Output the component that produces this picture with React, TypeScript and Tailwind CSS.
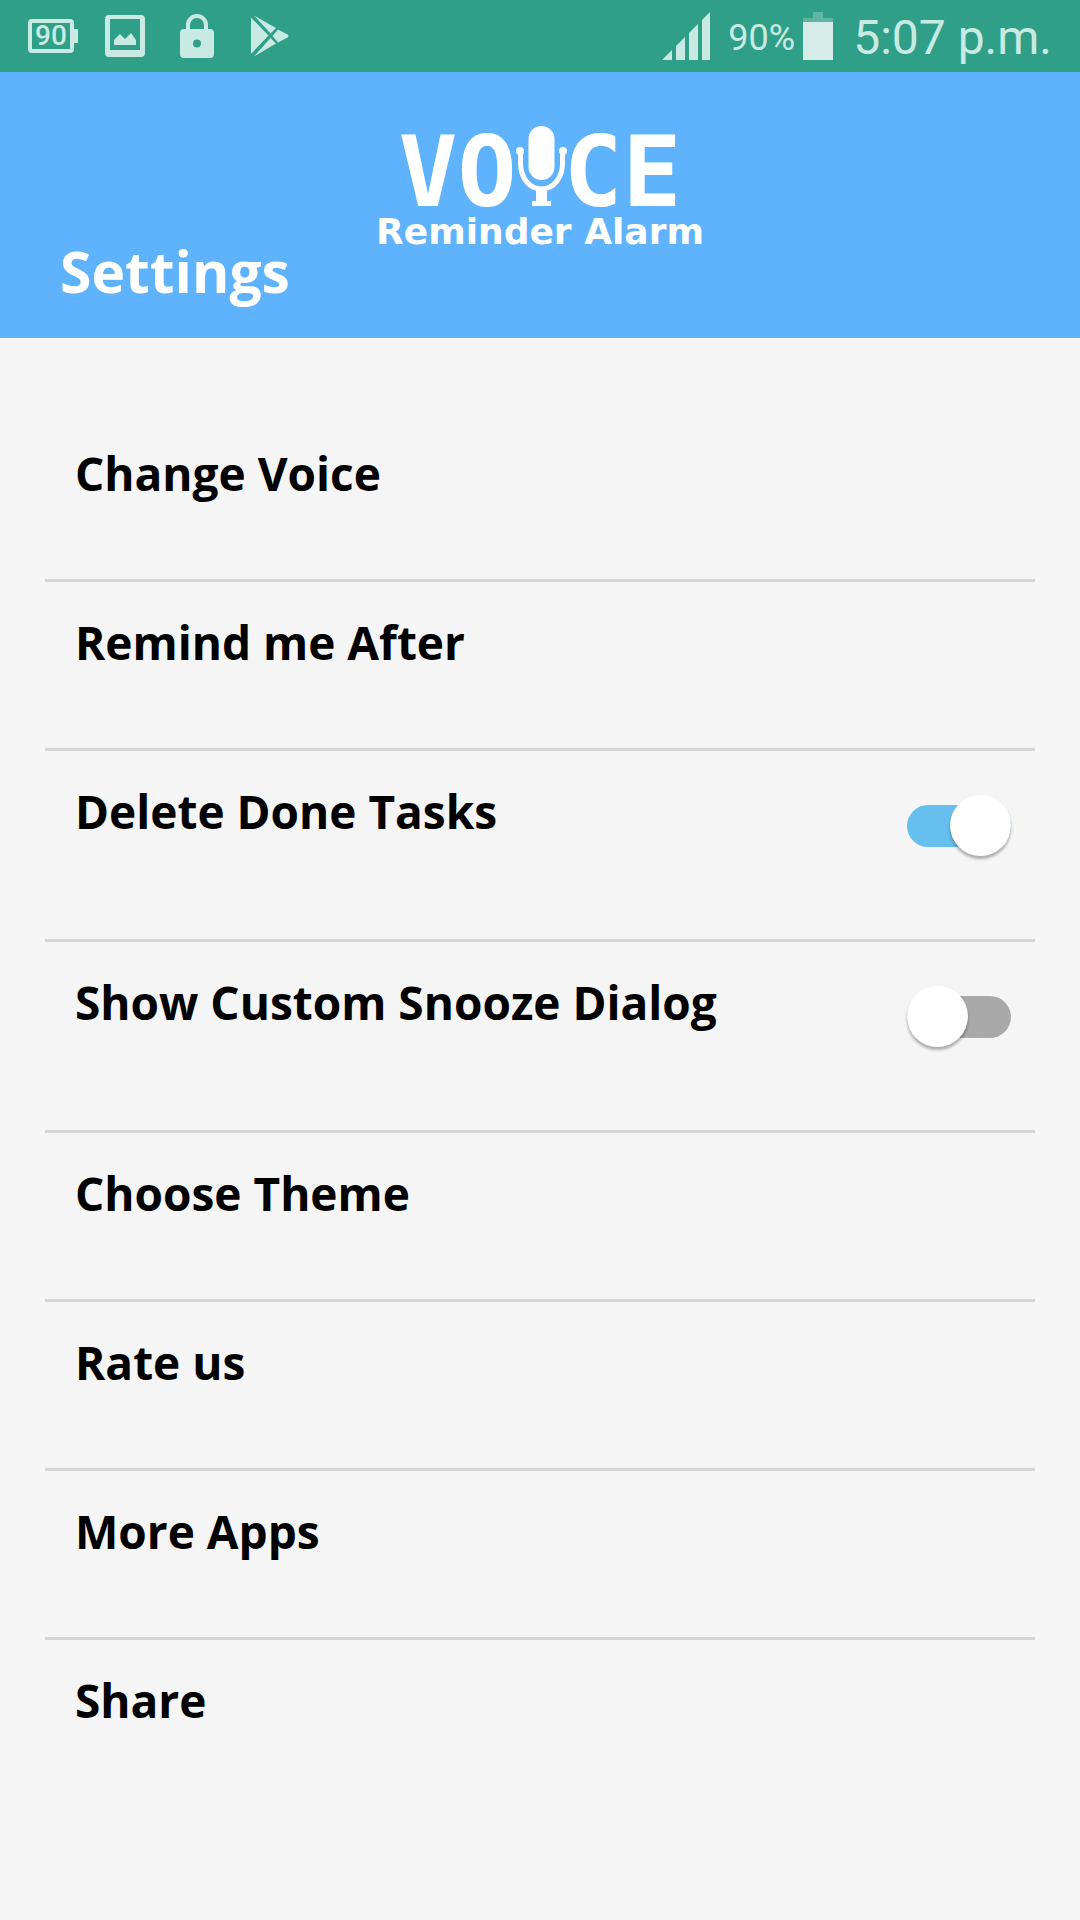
import { useState } from "react";

type SettingItem = {
  id: string;
  label: string;
  toggle?: boolean;
};

const items: SettingItem[] = [
  { id: "voice", label: "Change Voice" },
  { id: "remind", label: "Remind me After" },
  { id: "deleteDone", label: "Delete Done Tasks", toggle: true },
  { id: "snooze", label: "Show Custom Snooze Dialog", toggle: true },
  { id: "theme", label: "Choose Theme" },
  { id: "rate", label: "Rate us" },
  { id: "more", label: "More Apps" },
  { id: "share", label: "Share" },
];

function StatusBar() {
  return (
    <div className="flex h-[72px] items-center justify-between bg-[#309f88] pr-7 pl-7 font-['Roboto',sans-serif] text-[#c9eae2]">
      <div className="flex items-center">
        <div className="flex items-center">
          <div className="flex h-[34px] w-[46px] items-center justify-center rounded-sm border-4 border-current text-[28px] leading-7 font-medium">
            90
          </div>
          <div className="h-[14px] w-1 bg-current" />
        </div>
        <svg className="ml-[27px] h-[42px] w-10" viewBox="0 0 40 42" fill="currentColor">
          <path
            fillRule="evenodd"
            d="M4 0h32a4 4 0 0 1 4 4v34a4 4 0 0 1-4 4H4a4 4 0 0 1-4-4V4a4 4 0 0 1 4-4Zm1 4v31h30V4H5Z"
          />
          <path d="M9 30v-5l6-6 5 5 6-6 5 7v5H9Z" />
        </svg>
        <svg className="ml-[35px] h-11 w-[34px]" viewBox="0 0 34 44" fill="currentColor">
          <path
            fillRule="evenodd"
            d="M6 15v-4a11 11 0 0 1 22 0v4h2a4 4 0 0 1 4 4v21a4 4 0 0 1-4 4H4a4 4 0 0 1-4-4V19a4 4 0 0 1 4-4h2Zm4 0h14v-4a7 7 0 0 0-14 0v4Zm7 10.500a4 4 0 1 0 0 8 4 4 0 0 0 0-8Z"
          />
        </svg>
        <svg className="ml-9 h-[42px] w-10" viewBox="0 0 40 42" fill="currentColor">
          <path d="M1 2.500 18.500 20.500 1 39Z" />
          <path d="M4 0.500 26 13 20.500 18.500Z" />
          <path d="M28 14.500 37.500 19.500Q39.500 21 37.500 22.500L28 27.500 22.500 21Z" />
          <path d="M20.500 23 4 41.500 26 28.500Z" />
        </svg>
      </div>

      <div className="flex items-center">
        <svg className="h-12 w-12" viewBox="0 0 48 48" fill="currentColor">
          <path d="M0 48 10 38v10ZM14 48V34l9-9v23ZM27 48V21l9-9v36ZM40 48V8l8-8v48Z" />
        </svg>
        <span className="ml-[18px] pt-1 text-4xl leading-10">90%</span>
        <svg className="ml-2 h-12 w-[30px]" viewBox="0 0 30 48">
          <path d="M10 0h10v6h10v4H0V6h10Z" fill="#5db5a2" />
          <path d="M0 10h30v38H0Z" fill="#d6ece8" />
        </svg>
        <span className="ml-5 pt-1 text-5xl leading-[56px]">5:07 p.m.</span>
      </div>
    </div>
  );
}

function Logo() {
  return (
    <div className="flex flex-col items-center">
      <div className="flex items-baseline justify-center font-['DejaVu_Sans_Mono',monospace] text-[98px] leading-[84px] font-bold">
        <span>VO</span>
        <svg className="-mr-1 h-20 w-[51px]" viewBox="0 0 51 80" fill="currentColor">
          <rect x="12.500" y="0" width="26" height="54" rx="13" />
          <path
            d="M4.500 25v12c0 15 9 26 21 26S46.500 52 46.500 37V25"
            fill="none"
            stroke="currentColor"
            strokeWidth="5"
          />
          <circle cx="4" cy="25" r="4" />
          <circle cx="47" cy="25" r="4" />
          <path d="M20 62h11v13h4v5H16v-5h4Z" />
        </svg>
        <span>CE</span>
      </div>
      <div className="font-['DejaVu_Sans',sans-serif] text-4xl leading-9 font-bold">
        Reminder Alarm
      </div>
    </div>
  );
}

function SettingRow({ item, last }: { item: SettingItem; last: boolean }) {
  const [checked, setChecked] = useState(item.id === "deleteDone");

  if (item.toggle) {
    return (
      <li className="flex h-[191px] items-start justify-between border-b-3 border-[#d5d5d5] pr-6 pl-[30px]">
        <label htmlFor={item.id} className="pt-7 leading-16">
          {item.label}
        </label>
        <input
          id={item.id}
          type="checkbox"
          checked={checked}
          onChange={(e) => setChecked(e.target.checked)}
          className="relative mt-[54px] h-[42px] w-[104px] appearance-none rounded-full bg-[#a9a9a9] before:absolute before:-top-[10px] before:left-0 before:size-[61px] before:rounded-full before:bg-white before:shadow-[0_3px_3px_rgba(0,0,0,0.3)] checked:bg-[#66bfee] checked:before:left-[43px]"
        />
      </li>
    );
  }

  return (
    <li className={last ? "" : "border-b-3 border-[#d5d5d5]"}>
      <button type="button" className="block w-full px-[30px] pt-7 pb-[74px] text-left leading-16">
        {item.label}
      </button>
    </li>
  );
}

export default function App() {
  return (
    <div className="min-h-screen bg-[#f5f5f5] font-['Open_Sans',sans-serif]">
      <StatusBar />
      <header className="grid h-[266px] grid-cols-[1fr_auto_1fr] bg-[#5eb3fc] text-white">
        <h1 className="self-end pb-7 pl-[60px] text-[57px] leading-[78px] font-bold">Settings</h1>
        <div className="pt-[54px]">
          <Logo />
        </div>
      </header>
      <main className="px-[45px] pt-[75px]">
        <ul className="text-[46px] font-bold text-black">
          {items.map((item, i) => (
            <SettingRow key={item.id} item={item} last={i === items.length - 1} />
          ))}
        </ul>
      </main>
    </div>
  );
}
